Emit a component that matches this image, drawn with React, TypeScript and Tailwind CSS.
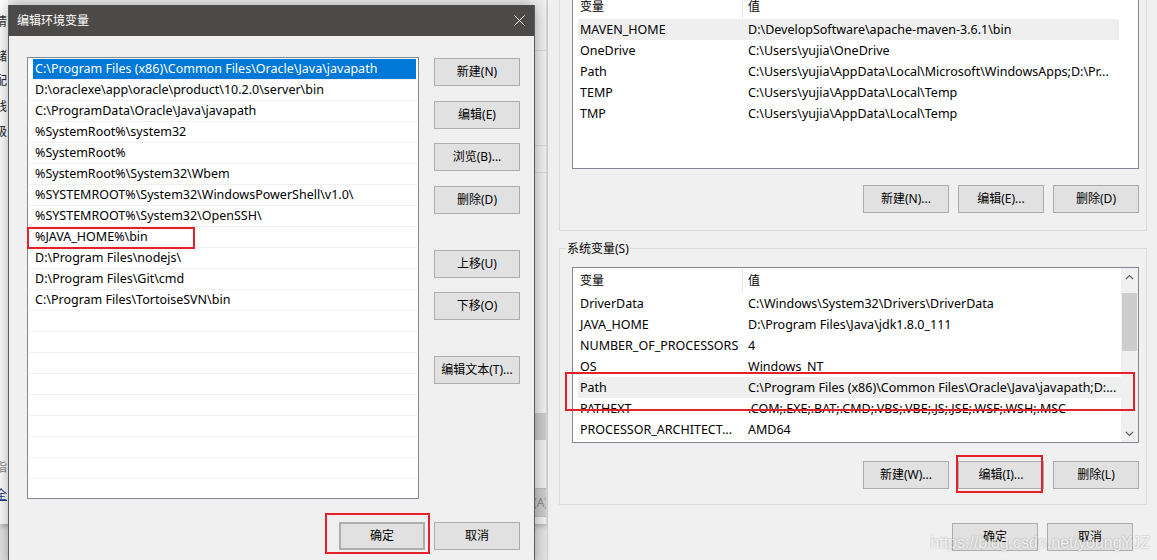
import React from "react";
import clsx from "clsx";

const editPaths = [
  "C:\\Program Files (x86)\\Common Files\\Oracle\\Java\\javapath",
  "D:\\oraclexe\\app\\oracle\\product\\10.2.0\\server\\bin",
  "C:\\ProgramData\\Oracle\\Java\\javapath",
  "%SystemRoot%\\system32",
  "%SystemRoot%",
  "%SystemRoot%\\System32\\Wbem",
  "%SYSTEMROOT%\\System32\\WindowsPowerShell\\v1.0\\",
  "%SYSTEMROOT%\\System32\\OpenSSH\\",
  "%JAVA_HOME%\\bin",
  "D:\\Program Files\\nodejs\\",
  "D:\\Program Files\\Git\\cmd",
  "C:\\Program Files\\TortoiseSVN\\bin",
  "", "", "", "", "", "", "", "", "",
];

const userVars = [
  ["MAVEN_HOME", "D:\\DevelopSoftware\\apache-maven-3.6.1\\bin"],
  ["OneDrive", "C:\\Users\\yujia\\OneDrive"],
  ["Path", "C:\\Users\\yujia\\AppData\\Local\\Microsoft\\WindowsApps;D:\\Pr..."],
  ["TEMP", "C:\\Users\\yujia\\AppData\\Local\\Temp"],
  ["TMP", "C:\\Users\\yujia\\AppData\\Local\\Temp"],
];

const systemVars = [
  ["DriverData", "C:\\Windows\\System32\\Drivers\\DriverData"],
  ["JAVA_HOME", "D:\\Program Files\\Java\\jdk1.8.0_111"],
  ["NUMBER_OF_PROCESSORS", "4"],
  ["OS", "Windows_NT"],
  ["Path", "C:\\Program Files (x86)\\Common Files\\Oracle\\Java\\javapath;D:..."],
  ["PATHEXT", ".COM;.EXE;.BAT;.CMD;.VBS;.VBE;.JS;.JSE;.WSF;.WSH;.MSC"],
  ["PROCESSOR_ARCHITECT...", "AMD64"],
];

function Btn({
  children,
  className,
}: {
  children: React.ReactNode;
  className?: string;
}) {
  return (
    <button
      className={clsx(
        "flex h-[28px] w-[86px] shrink-0 items-center justify-center border border-[#adadad] bg-[#e1e1e1] text-[12px] text-black",
        className
      )}
    >
      {children}
    </button>
  );
}

function VarRow({ name, value, active }: { name: string; value: string; active?: boolean }) {
  return (
    <div className={clsx("ml-[5px] flex h-[21px] items-center pt-px text-[12.5px]", active && "bg-[#efefef]")}>
      <div className="w-[170px] shrink-0 whitespace-nowrap pl-[2px]">{name}</div>
      <div className="whitespace-nowrap">{value}</div>
    </div>
  );
}

function Chevron({ up }: { up?: boolean }) {
  return (
    <svg width="9" height="6" viewBox="0 0 9 6" className={clsx(!up && "rotate-180")}>
      <path d="M1 5 L4.5 1.5 L8 5" fill="none" stroke="#606060" strokeWidth="1.2" />
    </svg>
  );
}

function BehindWindow() {
  // glyph fragments of the window underneath, only their right edge shows
  const glyphs: [number, string, string][] = [
    [15, "请", "text-[#333]"],
    [21, "储", "text-[#222]"],
    [10, "配", "text-[#222]"],
    [12, "线", "text-[#222]"],
    [11, "级", "text-[#222]"],
  ];
  return (
    <div className="absolute left-0 top-0 flex h-[524px] w-[547px] justify-between border-r border-[#d6d6d6] bg-[#f0f0f0] shadow-[0_2px_6px_rgba(0,0,0,0.25)]">
      <div className="flex w-[8px] flex-col overflow-hidden bg-white text-[12px] leading-[14px]">
        {glyphs.map(([gap, g, c], i) => (
          <div key={i} className={clsx("-ml-[5px] whitespace-nowrap", c)} style={{ marginTop: gap }}>
            {g}
          </div>
        ))}
        <div className="-ml-[5px] mt-[322px] text-[#888]">指</div>
        <div className="-ml-[5px] mt-[13px] text-[#1a3a8a] underline">全</div>
      </div>
      <div className="flex w-[12px] flex-col">
        <div className="mt-[50px] h-px bg-[#dadada]" />
        <div className="mt-[94px] h-px bg-[#dadada]" />
        <div className="mt-[26px] h-px bg-[#dadada]" />
        <div className="mt-[240px] h-[27px] bg-[#cccccc]" />
        <div className="mt-[48px] flex h-[29px] items-center justify-end overflow-hidden border-y border-[#bfbfbf] bg-[#cccccc] text-[12px] text-[#8a8a8a]">
          <span className="-mr-[2px] whitespace-nowrap">(A)</span>
        </div>
      </div>
    </div>
  );
}

function EditDialog() {
  return (
    <div className="absolute left-[8px] top-[5px] flex h-[560px] w-[527px] flex-col border-x border-[#5a5a5a] bg-[#f0f0f0] shadow-[0_0_14px_rgba(0,0,0,0.35)]">
      <div className="flex h-[31px] shrink-0 items-center justify-between bg-[#4b4a48] pl-[8px] pr-[9px] text-[12px] text-white">
        <span>编辑环境变量</span>
        <svg width="11" height="11" viewBox="0 0 11 11">
          <path d="M0.5 0.5 L10.5 10.5 M10.5 0.5 L0.5 10.5" stroke="#ffffff" strokeWidth="1" />
        </svg>
      </div>
      <div className="flex flex-col pl-[18px] pr-[14px] pt-[21px]">
        <div className="flex gap-[15px]">
          <div className="h-[442px] w-[392px] overflow-hidden border border-[#828790] bg-white px-px pt-px text-[12.5px] text-black">
            {editPaths.map((p, i) => (
              <div key={i} className="h-[21px] border-b border-[#f0f0f0] pl-[4px] pr-px">
                <div
                  className={clsx(
                    "flex h-full items-center whitespace-nowrap pl-[2px] pt-px",
                    i === 0 && "bg-[#0078d7] text-white"
                  )}
                >
                  {p}
                </div>
              </div>
            ))}
          </div>
          <div className="flex flex-col">
            <Btn className="mt-px">新建(N)</Btn>
            <Btn className="mt-[15px]">编辑(E)</Btn>
            <Btn className="mt-[14px]">浏览(B)...</Btn>
            <Btn className="mt-[15px]">删除(D)</Btn>
            <Btn className="mt-[36px]">上移(U)</Btn>
            <Btn className="mt-[14px]">下移(O)</Btn>
            <Btn className="mt-[36px]">编辑文本(T)...</Btn>
          </div>
        </div>
        <div className="mt-[23px] flex justify-end gap-[9px]">
          <Btn className="border-2 border-[#0078d7]">确定</Btn>
          <Btn>取消</Btn>
        </div>
      </div>
    </div>
  );
}

function EnvDialog() {
  return (
    <div className="absolute left-[547px] top-0 flex h-[560px] w-[611px] flex-col border-l border-[#cfcfcf] bg-[#f0f0f0] px-[11px] text-[12px] text-black">
      <div className="flex h-[231px] shrink-0 flex-col border-x border-b border-[#dcdcdc] pl-[12px] pr-[7px]">
        <div className="h-[169px] shrink-0 border-x border-b border-[#828790] bg-white">
          <div className="flex h-[19px] items-start leading-[14px]">
            <div className="h-[18px] w-[170px] shrink-0 border-r border-[#e5e5e5] pl-[7px]">变量</div>
            <div className="pl-[5px]">值</div>
          </div>
          <div className="mr-[19px]">
            {userVars.map(([n, v], i) => (
              <VarRow key={n + i} name={n} value={v} active={i === 0} />
            ))}
          </div>
        </div>
        <div className="mt-[16px] flex justify-end gap-[9px]">
          <Btn>新建(N)...</Btn>
          <Btn>编辑(E)...</Btn>
          <Btn>删除(D)</Btn>
        </div>
      </div>

      <div className="mt-[17px] flex shrink-0 flex-col border border-[#dcdcdc] pb-[15px] pl-[12px] pr-[7px]">
        <div className="-ml-[6px] -mt-[9px] w-fit bg-[#f0f0f0] px-px leading-[17px]">系统变量(S)</div>
        <div className="mt-[10px] flex h-[176px] border border-[#828790] bg-white">
          <div className="flex-1">
            <div className="flex h-[25px] items-center">
              <div className="flex h-[23px] w-[170px] shrink-0 items-center border-r border-[#e5e5e5] pl-[7px]">变量</div>
              <div className="pl-[5px]">值</div>
            </div>
            {systemVars.map(([n, v], i) => (
              <VarRow key={n + i} name={n} value={v} active={i === 4} />
            ))}
          </div>
          <div className="flex w-[17px] flex-col bg-[#f0f0f0]">
            <div className="flex h-[17px] items-center justify-center">
              <Chevron up />
            </div>
            <div className="mx-[1px] mt-[8px] h-[58px] bg-[#cdcdcd]" />
            <div className="flex-1" />
            <div className="flex h-[17px] items-center justify-center">
              <Chevron />
            </div>
          </div>
        </div>
        <div className="mt-[18px] flex justify-end gap-[9px]">
          <Btn>新建(W)...</Btn>
          <Btn>编辑(I)...</Btn>
          <Btn>删除(L)</Btn>
        </div>
      </div>

      <div className="mt-[18px] flex justify-end gap-[9px] pr-[14px]">
        <Btn>确定</Btn>
        <Btn>取消</Btn>
      </div>
    </div>
  );
}

export default function App() {
  return (
    <div className="relative h-[560px] w-[1157px] overflow-hidden bg-[#e4e4e4] font-['Noto_Sans','Noto_Sans_CJK_SC',sans-serif]">
      <BehindWindow />
      <EnvDialog />
      <EditDialog />

      {/* red annotation boxes */}
      <div className="absolute left-[27px] top-[227px] h-[22px] w-[168px] border-2 border-[#e5202a]" />
      <div className="absolute left-[325px] top-[513px] h-[41px] w-[105px] border-2 border-[#e5202a]" />
      <div className="absolute left-[565px] top-[372px] h-[39px] w-[570px] border-2 border-[#e5202a]" />
      <div className="absolute left-[956px] top-[455px] h-[38px] w-[87px] border-2 border-[#e5202a]" />

      <div className="absolute right-[7px] top-[531px] font-['Liberation_Sans',sans-serif] text-[16px] text-white/80 [text-shadow:0_0_2px_rgba(0,0,0,0.35)]">
        https://blog.csdn.net/youngYJZ
      </div>
    </div>
  );
}
